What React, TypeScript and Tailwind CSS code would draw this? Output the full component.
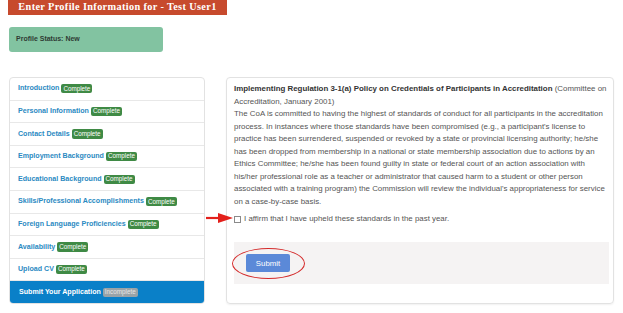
import React from "react";

const items = [
  "Introduction",
  "Personal Information",
  "Contact Details",
  "Employment Background",
  "Educational Background",
  "Skills/Professional Accomplishments",
  "Foreign Language Proficiencies",
  "Availability",
  "Upload CV",
];

export default function App() {
  return (
    <div className="relative w-[623px] h-[313px] bg-white font-['Liberation_Sans',Arial,sans-serif] overflow-hidden">
      <div className="ml-[8px] w-[219px] h-[15px] bg-[#c74a2d] flex items-center justify-center text-white font-bold text-[10.3px] tracking-[0.35px] font-['Liberation_Serif',serif] leading-none">
        Enter Profile Information for - Test User1
      </div>
      <div className="ml-[9px] mt-[12px] w-[154px] h-[25px] bg-[#82c3a1] rounded-[3px] flex items-center pl-[7px] text-[7px] font-bold text-[#2f3b34]">
        Profile Status: New
      </div>
      <div className="flex mt-[25px] ml-[9px] gap-[21px]">
        <div className="w-[196px] h-[227px] border border-[#e2e2e2] rounded-[4px] flex flex-col overflow-hidden bg-white">
          {items.map((t) => (
            <div
              key={t}
              className="h-[22.6px] border-b border-[#e8e8e8] flex items-center pl-[8px] text-[7.1px] font-bold text-[#2b8ac2]"
            >
              <span>{t}</span>
              <span className="ml-[2px] bg-[#3f8a45] text-white font-normal text-[6.3px] px-[2px] py-[1.5px] rounded-[2px] leading-none">
                Complete
              </span>
            </div>
          ))}
          <div className="flex-1 bg-[#0a80c8] flex items-center pl-[9px] text-[7.1px] font-bold text-white">
            <span>Submit Your Application</span>
            <span className="ml-[2px] bg-[#9aa3a8] text-[#e6e6e6] font-normal text-[6.3px] px-[2px] py-[1.5px] rounded-[2px] leading-none">
              Incomplete
            </span>
          </div>
        </div>
        <div className="w-[388px] h-[227px] border border-[#e2e2e2] rounded-[4px] shadow-[0_1px_2px_rgba(0,0,0,0.06)] pt-[5px] px-[7px]">
          <div className="text-[7.9px] leading-[12.55px] text-[#555] whitespace-nowrap">
            <b className="text-[#333]">
              Implementing Regulation 3-1(a) Policy on Credentials of Participants in Accreditation
            </b>{" "}
            (Committee on
            <br />
            Accreditation, January 2001)
            <br />
            The CoA is committed to having the highest of standards of conduct for all participants in the accreditation
            <br />
            process. In instances where those standards have been compromised (e.g., a participant's license to
            <br />
            practice has been surrendered, suspended or revoked by a state or provincial licensing authority; he/she
            <br />
            has been dropped from membership in a national or state membership association due to actions by an
            <br />
            Ethics Committee; he/she has been found guilty in state or federal court of an action association with
            <br />
            his/her professional role as a teacher or administrator that caused harm to a student or other person
            <br />
            associated with a training program) the Commission will review the individual's appropriateness for service
            <br />
            on a case-by-case basis.
          </div>
          <div className="mt-[4.5px] flex items-center text-[7.9px] leading-[12.5px] text-[#555]">
            <span className="w-[7px] h-[7px] border border-[#8a8a8a] bg-white mr-[3px]" />
            I affirm that I have upheld these standards in the past year.
          </div>
          <div className="relative mt-[17px] w-[375px] h-[42px] bg-[#f5f3f3] flex items-center pl-[12px]">
            <div className="w-[44px] h-[18px] bg-[#5b89d8] rounded-[2px] text-white text-[7.8px] flex items-center justify-center">
              Submit
            </div>
            <div className="absolute left-[-2px] top-[6px] w-[73px] h-[31px] rounded-[50%] border border-[#d42a2a]" />
          </div>
        </div>
      </div>
      <svg className="absolute left-[204px] top-[210px]" width="32" height="16" viewBox="0 0 32 16">
        <line x1="2" y1="8" x2="18" y2="8" stroke="#e3201b" strokeWidth="2.2" />
        <polygon points="14,3 29,8 14,13" fill="#e3201b" />
      </svg>
    </div>
  );
}
